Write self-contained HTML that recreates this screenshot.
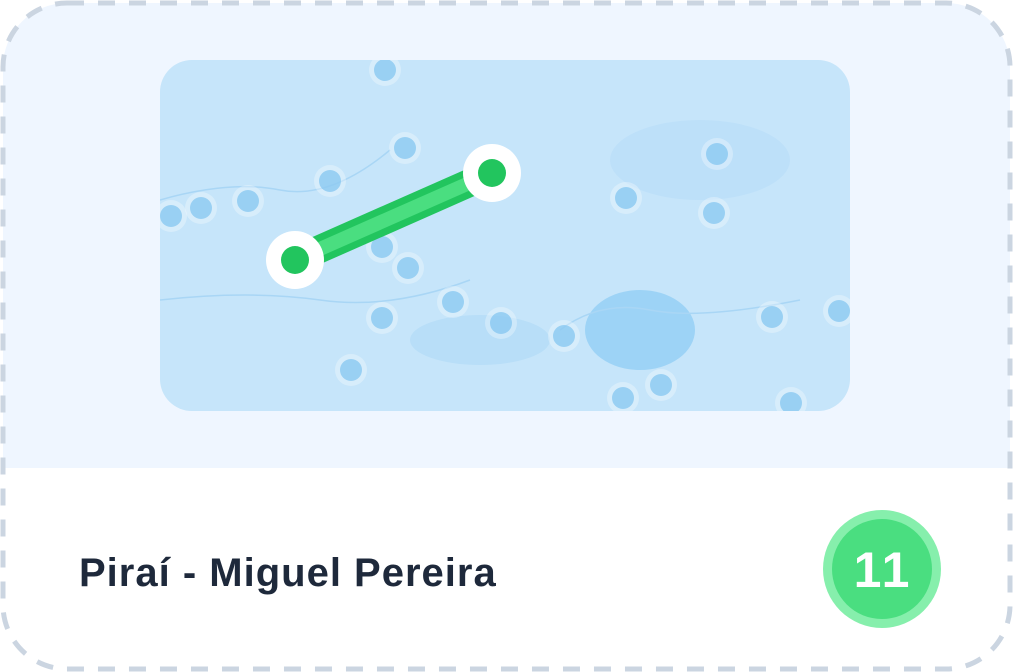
<!DOCTYPE html>
<html><head><meta charset="utf-8"><style>
html,body{margin:0;padding:0;background:#fff;width:1013px;height:672px;overflow:hidden}
</style></head><body>
<svg width="1013" height="672" viewBox="0 0 1013 672" xmlns="http://www.w3.org/2000/svg">
<defs>
<clipPath id="card"><rect x="3" y="3" width="1007" height="666" rx="64"/></clipPath>
<clipPath id="map"><rect x="160" y="60" width="690" height="351" rx="32"/></clipPath>
</defs>
<g clip-path="url(#card)">
<rect x="0" y="0" width="1013" height="468" fill="#eff6ff"/>
</g>
<rect x="3" y="3" width="1007" height="666" rx="64" fill="none" stroke="#cbd5e1" stroke-width="5" stroke-dasharray="17 14"/>
<g clip-path="url(#map)">
<rect x="160" y="60" width="690" height="351" fill="#c6e5fa"/>
<ellipse cx="640" cy="330" rx="55" ry="40" fill="#9dd3f6"/>
<ellipse cx="480" cy="340" rx="70" ry="25" fill="#b8def8"/>
<ellipse cx="700" cy="160" rx="90" ry="40" fill="#bde0f9"/>
<path d="M160 200 Q230 180 280 190 T390 150 M160 300 Q250 290 320 300 T470 280 M560 330 Q600 300 650 310 T800 300" stroke="#a9d6f5" stroke-width="1.5" fill="none"/>
<g fill="#ffffff" fill-opacity="0.3">
<circle cx="385" cy="70" r="16"/><circle cx="405" cy="148" r="16"/><circle cx="330" cy="181" r="16"/>
<circle cx="201" cy="208" r="16"/><circle cx="248" cy="201" r="16"/><circle cx="171" cy="216" r="16"/>
<circle cx="382" cy="247" r="16"/><circle cx="408" cy="268" r="16"/><circle cx="453" cy="302" r="16"/>
<circle cx="382" cy="318" r="16"/><circle cx="501" cy="323" r="16"/><circle cx="564" cy="336" r="16"/>
<circle cx="351" cy="370" r="16"/><circle cx="626" cy="198" r="16"/><circle cx="717" cy="154" r="16"/>
<circle cx="714" cy="213" r="16"/><circle cx="772" cy="317" r="16"/><circle cx="839" cy="311" r="16"/>
<circle cx="661" cy="385" r="16"/><circle cx="623" cy="398" r="16"/><circle cx="791" cy="403" r="16"/>
</g>
<g fill="#7fc3f0" fill-opacity="0.7">
<circle cx="385" cy="70" r="11"/><circle cx="405" cy="148" r="11"/><circle cx="330" cy="181" r="11"/>
<circle cx="201" cy="208" r="11"/><circle cx="248" cy="201" r="11"/><circle cx="171" cy="216" r="11"/>
<circle cx="382" cy="247" r="11"/><circle cx="408" cy="268" r="11"/><circle cx="453" cy="302" r="11"/>
<circle cx="382" cy="318" r="11"/><circle cx="501" cy="323" r="11"/><circle cx="564" cy="336" r="11"/>
<circle cx="351" cy="370" r="11"/><circle cx="626" cy="198" r="11"/><circle cx="717" cy="154" r="11"/>
<circle cx="714" cy="213" r="11"/><circle cx="772" cy="317" r="11"/><circle cx="839" cy="311" r="11"/>
<circle cx="661" cy="385" r="11"/><circle cx="623" cy="398" r="11"/><circle cx="791" cy="403" r="11"/>
</g>
</g>
<line x1="295" y1="260" x2="492" y2="173" stroke="#22c55e" stroke-width="28"/>
<line x1="295" y1="260" x2="492" y2="173" stroke="#4ade80" stroke-width="14"/>
<circle cx="295" cy="260" r="29" fill="#fff"/><circle cx="295" cy="260" r="14" fill="#22c55e"/>
<circle cx="492" cy="173" r="29" fill="#fff"/><circle cx="492" cy="173" r="14" fill="#22c55e"/>
<text x="79" y="586" font-family="Liberation Sans, sans-serif" font-size="40" font-weight="bold" letter-spacing="1" fill="#1e293b">Piraí - Miguel Pereira</text>
<circle cx="882" cy="569" r="59" fill="#86efac"/>
<circle cx="882" cy="569" r="50" fill="#4ade80"/>
<text x="883" y="587" text-anchor="middle" font-family="Liberation Sans, sans-serif" font-size="50" font-weight="bold" letter-spacing="3" fill="#fff">11</text>
</svg>
</body></html>
